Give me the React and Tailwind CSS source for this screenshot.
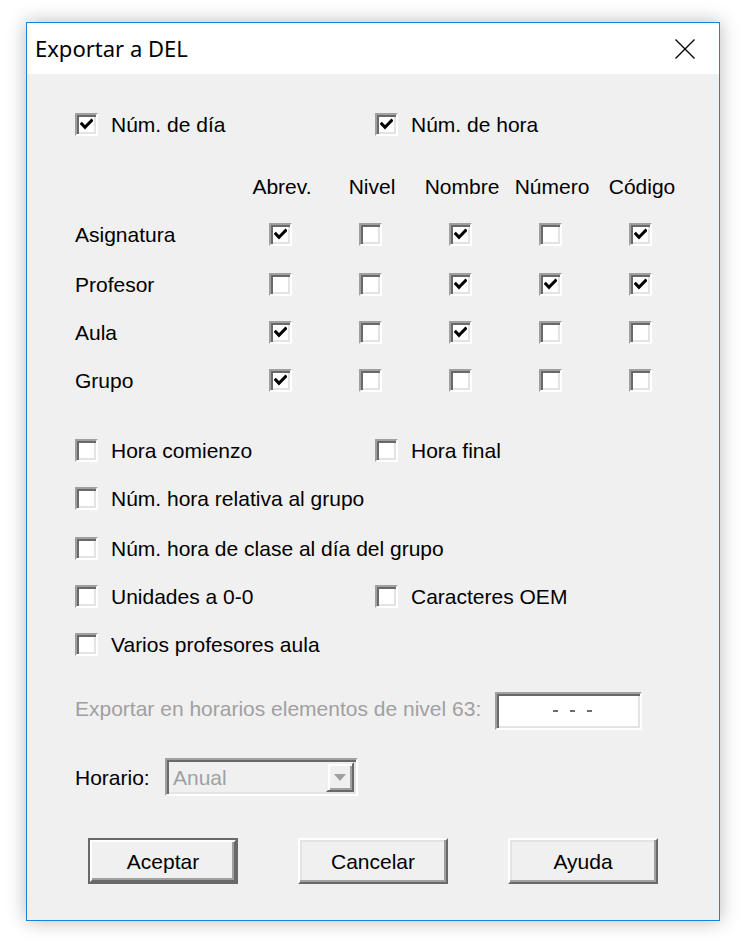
import React from 'react';

const sans = { fontFamily: '"Liberation Sans", Arial, sans-serif' };

function Check() {
  return (
    <svg width="13" height="13" viewBox="0 0 12 12" className="block">
      <polyline points="1.6,5.4 4.6,8.6 10.6,2.4" fill="none" stroke="#000" strokeWidth="2.8" strokeLinecap="square" />
    </svg>
  );
}

function Box({ checked }) {
  return (
    <div className="w-[23px] h-[23px] shrink-0 border-2 border-t-[#a0a0a0] border-l-[#a0a0a0] border-r-white border-b-white bg-white shadow-[inset_2px_2px_0_#696969,inset_-2px_-2px_0_#e3e3e3] flex items-center justify-center">
      {checked && <Check />}
    </div>
  );
}

function CheckLabel({ checked, label, className = '' }) {
  return (
    <div className={'flex items-center gap-[13px] ' + className}>
      <Box checked={checked} />
      <span>{label}</span>
    </div>
  );
}

function Btn({ label, primary }) {
  return (
    <div className={'w-[150px] h-[46px] ' + (primary ? 'border-2 border-[#696969]' : '')}>
      <div className={'h-full border-2 border-t-white border-l-white border-r-[#696969] border-b-[#696969] bg-[#f0f0f0] flex items-center justify-center ' + (primary ? 'shadow-[inset_-2px_-2px_0_#a0a0a0]' : 'shadow-[inset_-2px_-2px_0_#a0a0a0,inset_2px_2px_0_#e3e3e3]')}>
        {label}
      </div>
    </div>
  );
}

const cols = ['Abrev.', 'Nivel', 'Nombre', 'Número', 'Código'];
const rows = [
  ['Asignatura', [1, 0, 1, 0, 1]],
  ['Profesor', [0, 0, 1, 1, 1]],
  ['Aula', [1, 0, 1, 0, 0]],
  ['Grupo', [1, 0, 0, 0, 0]],
];
const rowGaps = ['mt-[18px]', 'mt-[20px]', 'mt-[18px]', 'mt-[18px]'];

export default function App() {
  return (
    <div className="w-[742px] h-[948px] bg-white pt-[22px] pl-[26px]">
      <div className="w-[694px] h-[899px] border border-[#1883d7] bg-[#f0f0f0] shadow-[0_0_18px_rgba(0,0,0,0.28)] flex flex-col">
        <div className="h-[51px] bg-white flex items-center justify-between pl-[8px] pr-[24px]">
          <span className="text-[22px] text-black" style={{ fontFamily: '"Noto Sans", "Open Sans", sans-serif' }}>Exportar a DEL</span>
          <svg width="20" height="20" viewBox="0 0 20 20">
            <path d="M0.5 0.5 L19.5 19.5 M19.5 0.5 L0.5 19.5" stroke="#000" strokeWidth="1.3" />
          </svg>
        </div>

        <div className="flex flex-col pl-[48px] pt-[35px] text-[21px] text-black leading-none" style={sans}>
          <div className="h-[30px] flex items-center">
            <CheckLabel checked label="Núm. de día" className="w-[300px]" />
            <CheckLabel checked label="Núm. de hora" />
          </div>

          <div className="h-[30px] flex items-center mt-[32px]">
            <div className="w-[160px]" />
            {cols.map((c) => (
              <div key={c} className="w-[90px] text-center pl-[4px]">{c}</div>
            ))}
          </div>

          {rows.map(([name, vals], i) => (
            <div key={name} className={'h-[30px] flex items-center ' + rowGaps[i]}>
              <div className="w-[160px]">{name}</div>
              {vals.map((v, j) => (
                <div key={j} className="w-[90px] flex justify-center">
                  <Box checked={!!v} />
                </div>
              ))}
            </div>
          ))}

          <div className="h-[30px] flex items-center mt-[40px]">
            <CheckLabel label="Hora comienzo" className="w-[300px]" />
            <CheckLabel label="Hora final" />
          </div>
          <div className="h-[30px] flex items-center mt-[18px]">
            <CheckLabel label="Núm. hora relativa al grupo" />
          </div>
          <div className="h-[30px] flex items-center mt-[20px]">
            <CheckLabel label="Núm. hora de clase al día del grupo" />
          </div>
          <div className="h-[30px] flex items-center mt-[18px]">
            <CheckLabel label="Unidades a 0-0" className="w-[300px]" />
            <CheckLabel label="Caracteres OEM" />
          </div>
          <div className="h-[30px] flex items-center mt-[18px]">
            <CheckLabel label="Varios profesores aula" />
          </div>

          <div className="h-[38px] flex items-center mt-[33px]">
            <span className="text-[#a0a0a0] w-[420px] -mt-[5px]">Exportar en horarios elementos de nivel 63:</span>
            <div className="w-[147px] h-[38px] border-2 border-t-[#a0a0a0] border-l-[#a0a0a0] border-r-white border-b-white bg-white shadow-[inset_2px_2px_0_#696969,inset_-2px_-2px_0_#e3e3e3] flex items-center justify-center gap-[12px] pl-[8px]">
              <span className="w-[5px] h-[2px] bg-[#6d6d6d]" />
              <span className="w-[5px] h-[2px] bg-[#6d6d6d]" />
              <span className="w-[5px] h-[2px] bg-[#6d6d6d]" />
            </div>
          </div>

          <div className="h-[38px] flex items-center mt-[28px]">
            <span className="w-[90px]">Horario:</span>
            <div className="w-[193px] h-[38px] border-2 border-t-[#a0a0a0] border-l-[#a0a0a0] border-r-white border-b-white bg-[#f0f0f0] shadow-[inset_2px_2px_0_#696969,inset_-2px_-2px_0_#e3e3e3] flex items-center p-[2px]">
              <span className="flex-1 text-[#a0a0a0] pl-[4px]">Anual</span>
              <div className="w-[28px] h-full border-2 border-t-[#f0f0f0] border-l-[#f0f0f0] border-r-[#696969] border-b-[#696969] bg-[#f0f0f0] shadow-[inset_2px_2px_0_#fff,inset_-2px_-2px_0_#a0a0a0] flex items-center justify-center">
                <svg width="12" height="7" viewBox="0 0 12 7">
                  <polygon points="0,0 12,0 6,7" fill="#a0a0a0" />
                </svg>
              </div>
            </div>
          </div>

          <div className="flex mt-[42px] pl-[13px] gap-[60px]">
            <Btn label="Aceptar" primary />
            <Btn label="Cancelar" />
            <Btn label="Ayuda" />
          </div>
        </div>
      </div>
    </div>
  );
}
